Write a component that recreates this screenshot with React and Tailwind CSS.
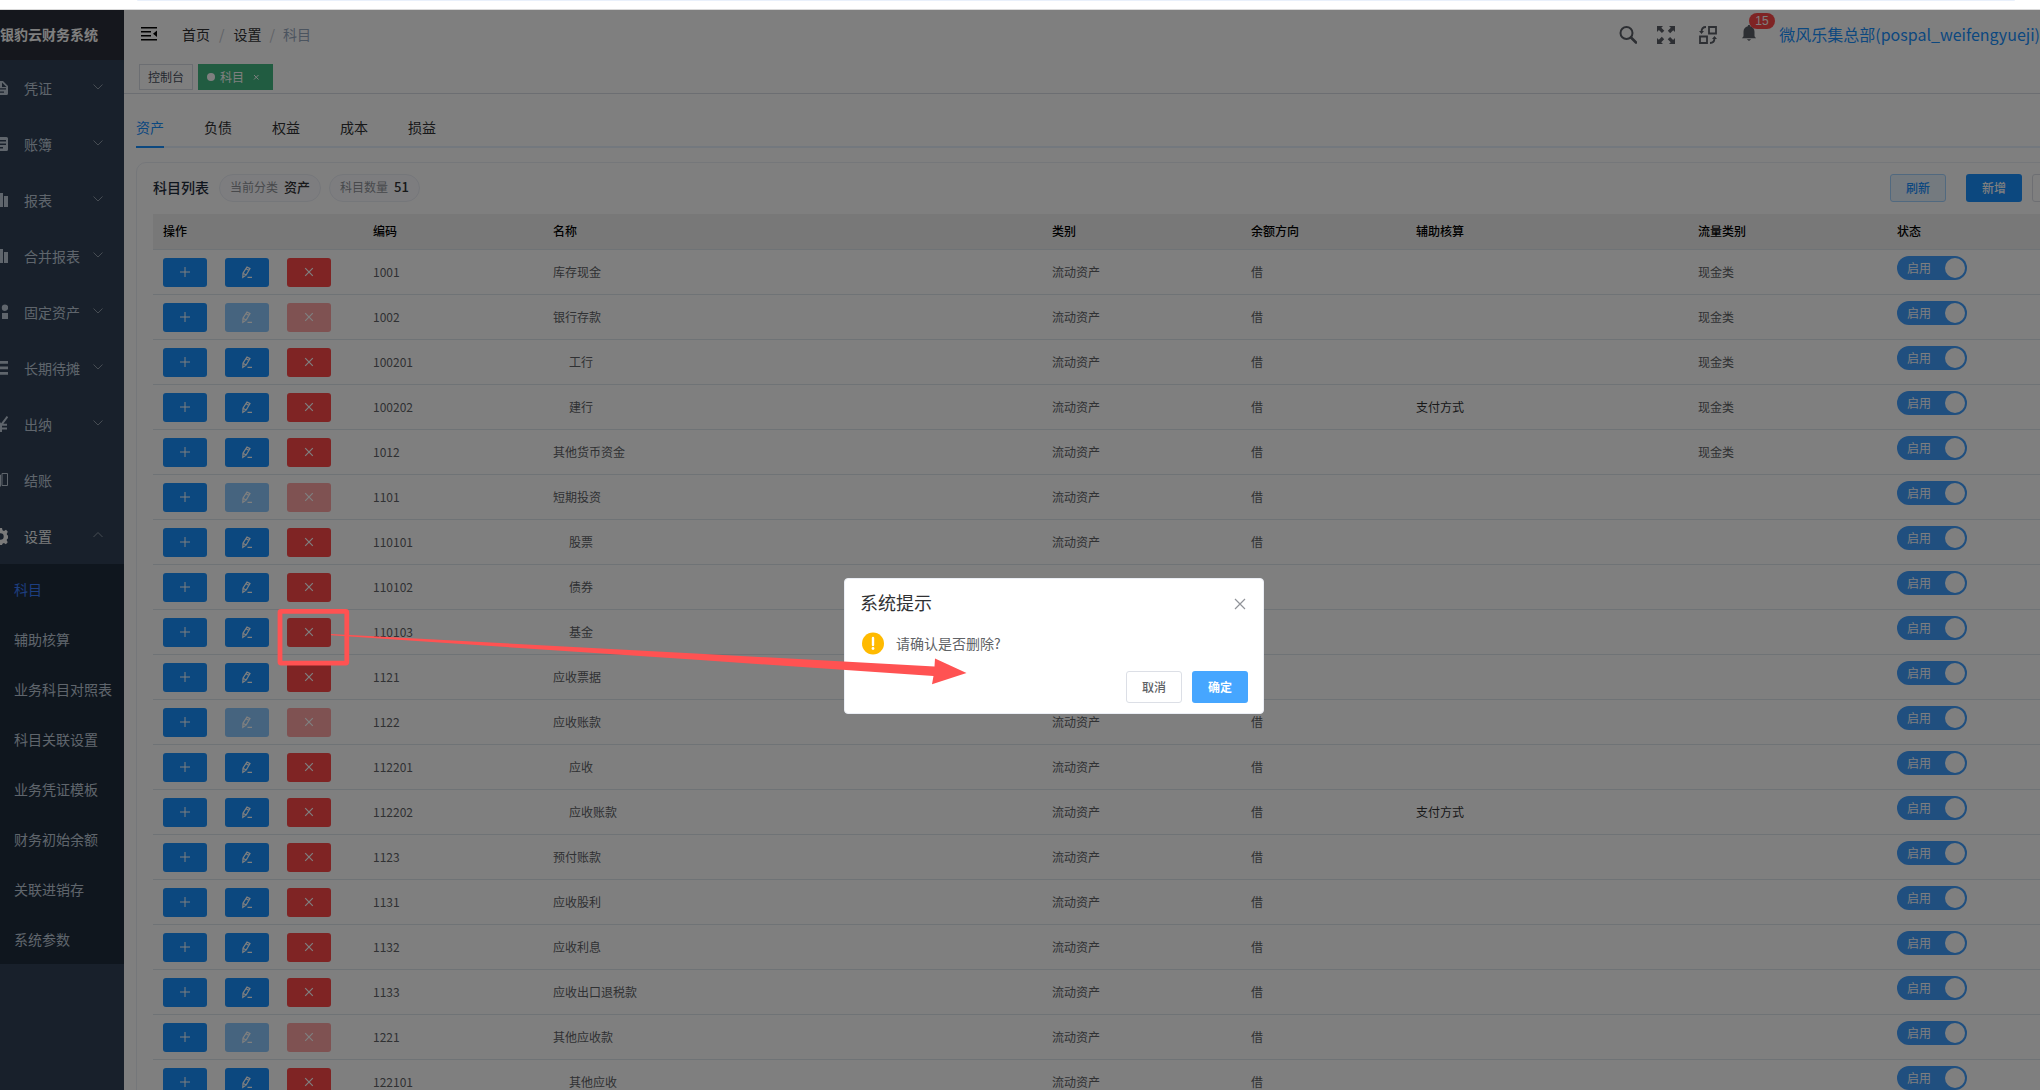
import React, { useState } from 'react';
import clsx from 'clsx';

const menus = [
  { name: '凭证', icon: 'doc', children: true },
  { name: '账簿', icon: 'book', children: true },
  { name: '报表', icon: 'chart', children: true },
  { name: '合并报表', icon: 'chart', children: true },
  { name: '固定资产', icon: 'people', children: true },
  { name: '长期待摊', icon: 'list', children: true },
  { name: '出纳', icon: 'yen', children: true },
  { name: '结账', icon: 'pages', children: false },
  { name: '设置', icon: 'gear', children: true, open: true },
];

const settingMenus = [
  '科目',
  '辅助核算',
  '业务科目对照表',
  '科目关联设置',
  '业务凭证模板',
  '财务初始余额',
  '关联进销存',
  '系统参数',
];

const tabs = ['资产', '负债', '权益', '成本', '损益'];

const subjects = [
  { code: '1001', name: '库存现金', flow: '现金类' },
  { code: '1002', name: '银行存款', flow: '现金类', locked: true },
  { code: '100201', name: '工行', flow: '现金类' },
  { code: '100202', name: '建行', flow: '现金类', assist: '支付方式' },
  { code: '1012', name: '其他货币资金', flow: '现金类' },
  { code: '1101', name: '短期投资', locked: true },
  { code: '110101', name: '股票' },
  { code: '110102', name: '债券' },
  { code: '110103', name: '基金' },
  { code: '1121', name: '应收票据' },
  { code: '1122', name: '应收账款', locked: true },
  { code: '112201', name: '应收' },
  { code: '112202', name: '应收账款', assist: '支付方式' },
  { code: '1123', name: '预付账款' },
  { code: '1131', name: '应收股利' },
  { code: '1132', name: '应收利息' },
  { code: '1133', name: '应收出口退税款' },
  { code: '1221', name: '其他应收款', locked: true },
  { code: '122101', name: '其他应收' },
];

const menuIcons = {
  doc: (
    <path
      fillRule="evenodd"
      d="M4 2h9l5 5v7.500a1.500 1.500 0 0 1-1.500 1.500H4V2zm8 1.500V8h4.500L12 3.500zM7 9.200v1.300h9V9.200H7zm0 3.300v1.300h7v-1.300H7z"
    />
  ),
  book: (
    <path
      fillRule="evenodd"
      d="M4 2h12.500A1.500 1.500 0 0 1 18 3.500v11a1.500 1.500 0 0 1-1.500 1.500H4V2zm3 3v1.400h9V5H7zm0 3.500v1.400h9V8.500H7zm0 3.500v1.400h6V12H7z"
    />
  ),
  chart: <path d="M3 8h4v8H3zM8.500 2H13v14H8.500zM14 5h4v11h-4z" />,
  people: <path d="M3 10h5v6H3zM12 10h6v6h-6zM5.500 3a3 3 0 1 1 0 6 3 3 0 0 1 0-6zM15 1.500a3.200 3.200 0 1 1 0 6.400 3.200 3.200 0 0 1 0-6.400z" />,
  list: <path d="M1 2h17v2.800H1zM1 7.500h17v2.800H1zM1 13h17v2.800H1z" />,
  yen: (
    <path
      d="M4.500 1.500L11 10l6.500-8.500M11 10v7M5 9.800h12M5 13.500h12"
      fill="none"
      stroke="currentColor"
      strokeWidth="2"
    />
  ),
  pages: (
    <path
      d="M1 2.500h7.500v13H1zM8.500 4h2v11.500M12 2.500h5.500v12H12z"
      fill="none"
      stroke="currentColor"
      strokeWidth="1"
    />
  ),
  gear: (
    <path
      fillRule="evenodd"
      d="M9 1h3l.5 2.200 1.500.7 2-1.200 1.800 2-1 2 .2 1.300 1 .4v3l-1 .5-.3 1.400 1 2-1.800 2-2-1.200-1.400.6L12 18H9l-.5-2.300-1.500-.7-2 1.200-2-2 1.200-2L3.500 11l-2-.5v-3l2.200-.5.6-1.400-1.200-2 2-2 2 1.200L8.500 2.500 9 1zM10.500 6.300a3.200 3.200 0 1 0 0 6.400 3.200 3.200 0 0 0 0-6.400z"
    />
  ),
};

const Chevron = ({ up }) => (
  <svg viewBox="0 0 12 12" className="mb-[2px] h-3 w-3 text-[#8d98a6]" fill="none" stroke="currentColor">
    <path d={up ? 'M1.500 8L6 3.500 10.500 8' : 'M1.500 3.500L6 8l4.500-4.500'} />
  </svg>
);

const Sidebar = () => (
  <aside className="w-[124px] shrink-0 overflow-hidden bg-[#304156] text-sm text-[#bfcbd9]">
    <h1 className="flex h-[50px] items-center whitespace-nowrap bg-[#2b2f3a] pb-[2px] text-sm font-bold text-white">
      银豹云财务系统
    </h1>
    <nav className="-ml-[30px]">
      {menus.map((menu) => (
        <a
          key={menu.name}
          href="#"
          className={clsx('flex h-14 items-center pr-5 pl-5', menu.open && 'text-[#f4f4f5]')}
        >
          <svg viewBox="0 0 18 18" className="mr-4 h-[18px] w-[18px] shrink-0" fill="currentColor">
            {menuIcons[menu.icon]}
          </svg>
          <span className="grow">{menu.name}</span>
          {menu.children && <Chevron up={menu.open} />}
        </a>
      ))}
      <div className="bg-[#1f2d3d]">
        {settingMenus.map((name, index) => (
          <a
            key={name}
            href="#"
            className={clsx('flex h-[50px] items-center whitespace-nowrap pl-11', index === 0 && 'text-[#3a7eff]')}
          >
            {name}
          </a>
        ))}
      </div>
    </nav>
  </aside>
);

const Navbar = () => (
  <header className="flex h-[50px] items-center bg-white pr-[77px] pl-[17px] shadow-[0_1px_4px_rgba(0,21,41,0.08)]">
    <button type="button" aria-label="折叠菜单" className="pb-[2px] text-black">
      <svg viewBox="0 0 16 16" className="h-4 w-4" fill="currentColor">
        <path d="M0 1h16v1.600H0zM0 5h10v1.600H0zM0 9h10v1.600H0zM0 13h16v1.600H0zM16 4.500v6.600L12 7.800z" />
      </svg>
    </button>
    <ol className="ml-[25px] flex grow items-center gap-2 pb-[2px] text-sm text-[#303133]">
      <li><a href="#">首页</a></li>
      <li className="px-px text-[#c0c4cc]">/</li>
      <li><a href="#">设置</a></li>
      <li className="text-[#c0c4cc]">/</li>
      <li className="text-[#97a8be]">科目</li>
    </ol>
    <div className="flex shrink-0 items-center text-[#5a5e66]">
      <button type="button" aria-label="搜索">
        <svg viewBox="0 0 18 18" className="h-[18px] w-[18px]" fill="none" stroke="currentColor" strokeWidth="2">
          <circle cx="7.500" cy="7" r="6" />
          <path d="M12 11.500l5 5" strokeWidth="2.600" strokeLinecap="round" />
        </svg>
      </button>
      <button type="button" aria-label="全屏" className="ml-5">
        <svg viewBox="0 0 18 18" className="h-[18px] w-[18px]" fill="currentColor">
          <path d="M0 0h6L4.300 1.700l3 3-2.400 2.400-3-3L0 6zM18 0v6l-1.800-1.800-3 3-2.400-2.400 3-3L12 0zM0 18v-6l1.800 1.800 3-3 2.400 2.400-3 3L6 18zM18 18h-6l1.700-1.700-3-3 2.400-2.400 3 3L18 12z" />
        </svg>
      </button>
      <button type="button" aria-label="布局大小" className="ml-6">
        <svg viewBox="0 0 18 18" className="h-[18px] w-[18px]" fill="none" stroke="currentColor" strokeWidth="1.800">
          <path d="M10 1h7v6.500h-7zM1 10.500h7V17H1zM7 1C4 1 2.500 2.500 2.500 6M11 17c3 0 4.500-1.500 4.500-5" />
          <path d="M0 5h5L2.500 8zM13 13h5l-2.500-3z" fill="currentColor" stroke="none" />
        </svg>
      </button>
      <button type="button" aria-label="通知" className="relative ml-6 pb-1">
        <svg viewBox="0 0 16 18" className="h-[18px] w-4" fill="currentColor">
          <path d="M8 1c.8 0 1.200.5 1.200 1.200 2.700.7 4.300 2.800 4.300 5.500v4.500l1.500 2H1l1.500-2V7.700C2.500 5 4.100 2.900 6.800 2.200 6.800 1.500 7.200 1 8 1zM5.800 15.200h4.400L8 17z" />
        </svg>
        <span className="absolute -top-[11px] left-2 rounded-full bg-[#ff4949] px-[6px] font-['Liberation_Sans',sans-serif] text-xs leading-4 text-white">
          15
        </span>
      </button>
      <a href="#" className="ml-[22px] whitespace-nowrap pb-[2px] text-base text-[#1890ff]">
        微风乐集总部(pospal_weifengyueji)
      </a>
    </div>
  </header>
);

const TagsView = () => (
  <div className="flex h-[34px] items-center gap-[5px] border-b border-[#d8dce5] bg-white pl-[15px] text-xs">
    <a href="#" className="flex h-[26px] items-center border border-[#d8dce5] px-2 text-[#495060]">
      控制台
    </a>
    <a href="#" className="flex h-[26px] items-center border border-[#42b983] bg-[#42b983] px-2 text-white">
      <span className="mr-[5px] h-2 w-2 rounded-full bg-white" />
      科目
      <svg viewBox="0 0 16 16" className="ml-1 h-4 w-4" fill="none" stroke="currentColor">
        <path d="M6 6l4.500 4.500M10.500 6L6 10.500" />
      </svg>
    </a>
  </div>
);

const ActionButton = ({ label, tone, disabled, children }) => (
  <button
    type="button"
    aria-label={label}
    disabled={disabled}
    className={clsx(
      'flex h-[29px] w-11 items-center justify-center rounded-[3px] text-white',
      tone === 'danger' && (disabled ? 'bg-[#ffa4a4]' : 'bg-[#ff4949]'),
      tone === 'primary' && (disabled ? 'bg-[#8cc8ff]' : 'bg-[#1890ff]'),
    )}
  >
    <svg viewBox="0 0 12 12" className="h-3 w-3 overflow-visible" fill="none" stroke="currentColor">
      {children}
    </svg>
  </button>
);

const SubjectRow = ({ subject }) => {
  const [enabled, setEnabled] = useState(true);

  return (
    <tr className="h-[45px] text-[#606266] *:border-b *:border-[#dfe6ec] *:px-[10px]">
      <td>
        <div className="flex gap-[18px]">
          <ActionButton label="新增下级" tone="primary">
            <path d="M6 1v10M1 6h10" />
          </ActionButton>
          <ActionButton label="编辑" tone="primary" disabled={subject.locked}>
            <path
              d="M2 7.200L6 1l3 1.600-3.900 6.400-3.300 2.400zM5 2.700l2.900 1.700M2 7.200l3.100 1.800M6.500 11.400H11"
              strokeWidth="1.200"
            />
          </ActionButton>
          <ActionButton label="删除" tone="danger" disabled={subject.locked}>
            <path d="M2.200 2.200l7.600 7.600M9.800 2.200L2.200 9.800" strokeWidth="1.200" />
          </ActionButton>
        </div>
      </td>
      <td>{subject.code}</td>
      <td><span className={clsx(subject.code.length > 4 && 'ml-4')}>{subject.name}</span></td>
      <td>流动资产</td>
      <td>借</td>
      <td className="text-[#303133]">{subject.assist}</td>
      <td>{subject.flow}</td>
      <td className="pb-2">
        <label className="relative block h-6 w-[70px]">
          <input
            type="checkbox"
            role="switch"
            checked={enabled}
            onChange={(e) => setEnabled(e.target.checked)}
            className="flex h-6 w-[70px] appearance-none rounded-full bg-[#c0ccda] p-[2px] before:h-5 before:w-5 before:rounded-full before:bg-white checked:justify-end checked:bg-[#409eff]"
          />
          <span className="absolute top-1 left-[10px] leading-4 text-white">{enabled ? '启用' : '停用'}</span>
        </label>
      </td>
    </tr>
  );
};

const SubjectTable = () => (
  <table className="mt-3 w-full table-fixed border-separate border-spacing-0 text-left text-xs">
    <colgroup>
      <col className="w-[210px]" />
      <col className="w-[180px]" />
      <col />
      <col className="w-[199px]" />
      <col className="w-[165px]" />
      <col className="w-[282px]" />
      <col className="w-[199px]" />
      <col className="w-[201px]" />
    </colgroup>
    <thead>
      <tr className="h-9 bg-[#f0f0f0] text-black">
        {['操作', '编码', '名称', '类别', '余额方向', '辅助核算', '流量类别', '状态'].map((title) => (
          <th key={title} className="border-b border-[#dfe6ec] px-[10px] pb-[2px] font-medium">{title}</th>
        ))}
      </tr>
    </thead>
    <tbody>
      {subjects.map((subject) => (
        <SubjectRow key={subject.code} subject={subject} />
      ))}
    </tbody>
  </table>
);

const Chip = ({ label, value }) => (
  <span className="flex h-7 items-center gap-[6px] rounded-full border border-[#ebeef5] bg-[#fafbff] px-[10px] pb-[2px] text-xs text-[#909399]">
    {label}
    <strong className="text-[13px] font-medium text-[#303133]">{value}</strong>
  </span>
);

const SubjectPage = () => (
  <div className="px-3 pt-[14px]">
    <div role="tablist" className="flex gap-10 border-b-2 border-[#e6f1fc] text-sm text-[#303133]">
      {tabs.map((tab, index) => (
        <button
          key={tab}
          type="button"
          role="tab"
          aria-selected={index === 0}
          className={clsx(
            '-mb-[2px] h-10 border-b-2',
            index === 0 ? 'border-[#1890ff] text-[#1890ff]' : 'border-transparent',
          )}
        >
          {tab}
        </button>
      ))}
    </div>

    <section className="mt-[14px] rounded-[10px] border border-[#ebeef5] px-4 pt-[11px]">
      <div className="flex items-center">
        <h2 className="mr-[10px] pb-[2px] text-sm font-medium text-[#1f2d3d]">科目列表</h2>
        <div className="flex grow gap-2">
          <Chip label="当前分类" value="资产" />
          <Chip label="科目数量" value="51" />
        </div>
        <div className="flex text-xs font-medium">
          <button type="button" className="h-7 w-14 rounded-[3px] border border-[#a3d3ff] bg-[#e8f4ff] text-[#1890ff]">
            刷新
          </button>
          <button type="button" className="ml-5 h-7 w-14 rounded-[3px] bg-[#1890ff] text-white">
            新增
          </button>
          <button
            type="button"
            aria-label="更多"
            className="ml-[10px] h-7 w-14 rounded-[3px] border border-[#dcdfe6]"
          />
        </div>
      </div>
      <SubjectTable />
    </section>
  </div>
);

const ConfirmDialog = () => (
  <div className="absolute top-0 right-[-68px] bottom-[-192px] left-0 flex items-center justify-center bg-black/50">
    <div role="dialog" aria-labelledby="confirm-title" className="w-[420px] rounded border border-[#ebeef5] bg-white px-[15px] pt-[11px] pb-[10px]">
      <div className="flex items-center justify-between">
        <h2 id="confirm-title" className="pb-1 text-lg leading-6 text-[#303133]">系统提示</h2>
        <button type="button" aria-label="关闭" className="text-[#909399]">
          <svg viewBox="0 0 16 16" className="h-4 w-4" fill="none" stroke="currentColor" strokeWidth="1.200">
            <path d="M3 3l10 10M13 3L3 13" />
          </svg>
        </button>
      </div>
      <div className="mt-[13px] flex h-6 items-center gap-3 text-sm text-[#606266]">
        <svg viewBox="0 0 24 24" className="h-6 w-6" fill="none">
          <circle cx="13" cy="12.500" r="11" fill="#ffba00" />
          <path d="M13 7v7" stroke="white" strokeWidth="2.400" strokeLinecap="round" />
          <circle cx="13" cy="17.500" r="1.400" fill="white" />
        </svg>
        <p>请确认是否删除?</p>
      </div>
      <div className="mt-4 flex justify-end gap-[10px] text-xs font-medium">
        <button type="button" className="h-8 w-14 rounded-[3px] border border-[#dcdfe6] text-[#606266]">
          取消
        </button>
        <button type="button" className="h-8 w-14 rounded-[3px] bg-[#46a6ff] font-bold text-white">
          确定
        </button>
      </div>
    </div>
  </div>
);

// Red marker from the delete button to the dialog
const Annotation = () => (
  <svg className="pointer-events-none absolute top-0 left-0 h-[700px] w-[1000px]" viewBox="0 0 1000 700">
    <rect x="280" y="601.300" width="66.800" height="51.800" rx="1" fill="none" stroke="#ff5252" strokeWidth="4.800" />
    <path d="M331 623.900L700 643.700 934.500 656.500 935 648.500 966.500 663 932 674.300 933.500 666 700 650 331 625.300z" fill="#ff5252" />
  </svg>
);

const App = () => (
  <div className="flex h-screen flex-col overflow-hidden bg-white font-['Noto_Sans_CJK_SC',sans-serif]">
    <div className="flex h-[10px] shrink-0 flex-col justify-between border-b border-[#d9d9d9] pr-[25px] pl-[137px]">
      <div className="h-px rounded-b bg-[#e9f0fb]" />
    </div>
    <div className="relative flex min-h-0 grow overflow-hidden">
      <Sidebar />
      <main className="-mr-[77px] min-w-0 grow">
        <Navbar />
        <TagsView />
        <SubjectPage />
      </main>
      <ConfirmDialog />
      <Annotation />
    </div>
  </div>
);

export default App;
